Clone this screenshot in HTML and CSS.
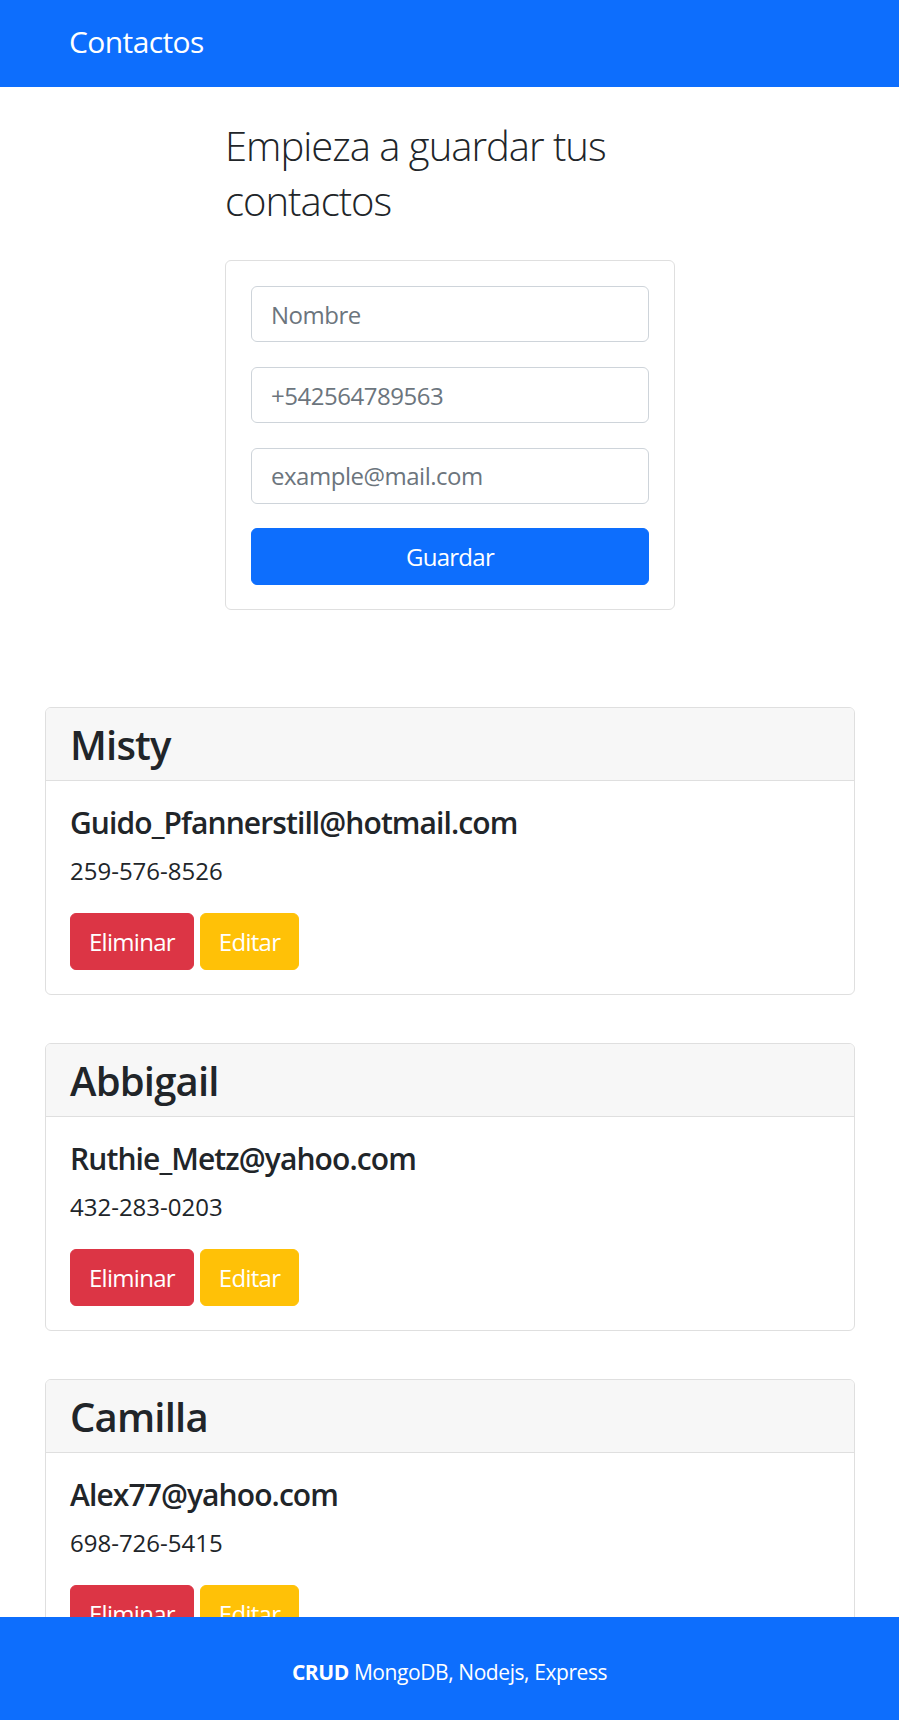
FILE: index.html
```html
<!DOCTYPE html>
<html lang="es">
<head>
<meta charset="utf-8">
<title>Contactos</title>
<link rel="stylesheet" href="styles.css">
</head>
<body>
<nav class="navbar">
  <a class="brand" href="#">Contactos</a>
</nav>
<main class="page">
  <section class="form-col">
    <h1 class="title">Empieza a guardar tus contactos</h1>
    <form class="form-card">
      <input class="field" type="text" placeholder="Nombre">
      <input class="field" type="text" placeholder="+542564789563">
      <input class="field" type="email" placeholder="example@mail.com">
      <button class="btn btn-primary btn-block" type="button">Guardar</button>
    </form>
  </section>
  <section class="contacts">
    <article class="card">
      <header class="card-header"><h2 class="card-name">Misty</h2></header>
      <div class="card-body">
        <h5 class="card-email">Guido_Pfannerstill@hotmail.com</h5>
        <p class="card-phone">259-576-8526</p>
        <div class="actions">
          <button class="btn btn-danger" type="button">Eliminar</button>
          <button class="btn btn-warning" type="button">Editar</button>
        </div>
      </div>
    </article>
    <article class="card">
      <header class="card-header"><h2 class="card-name">Abbigail</h2></header>
      <div class="card-body">
        <h5 class="card-email">Ruthie_Metz@yahoo.com</h5>
        <p class="card-phone">432-283-0203</p>
        <div class="actions">
          <button class="btn btn-danger" type="button">Eliminar</button>
          <button class="btn btn-warning" type="button">Editar</button>
        </div>
      </div>
    </article>
    <article class="card">
      <header class="card-header"><h2 class="card-name">Camilla</h2></header>
      <div class="card-body">
        <h5 class="card-email">Alex77@yahoo.com</h5>
        <p class="card-phone">698-726-5415</p>
        <div class="actions">
          <button class="btn btn-danger" type="button">Eliminar</button>
          <button class="btn btn-warning" type="button">Editar</button>
        </div>
      </div>
    </article>
  </section>
</main>
<footer class="footer"><strong>CRUD</strong> MongoDB, Nodejs, Express</footer>
</body>
</html>
```
FILE: styles.css
```css
* { box-sizing: border-box; }

body {
  margin: 0;
  font-family: "Open Sans", "Noto Sans", "Liberation Sans", sans-serif;
  font-size: 24px;
  line-height: 1.5;
  color: #212529;
  background: #fff;
}

.navbar {
  background: #0d6efd;
  height: 87px;
  padding: 19px 0 0 69px;
}

.brand {
  display: inline-block;
  color: #fff;
  font-size: 30px;
  line-height: 45px;
  text-decoration: none;
  letter-spacing: -0.02em;
}

.form-col {
  margin: 32px 224px 0 225px;
}

.title {
  margin: 0 0 32px;
  font-size: 40px;
  font-weight: 300;
  line-height: 54.7px;
  letter-spacing: -0.025em;
}

.form-card {
  display: flex;
  flex-direction: column;
  gap: 24.6px;
  border: 1px solid #dfdfdf;
  border-radius: 6px;
  padding: 25px 25px 24px;
}

.field {
  height: 56px;
  border: 1px solid #ced4da;
  border-radius: 6px;
  padding: 0 19px;
  font-family: inherit;
  font-size: 24px;
  color: #212529;
  letter-spacing: -0.02em;
  background: #fff;
}

.field::placeholder {
  color: #6c757d;
  opacity: 1;
}

.btn {
  font-family: inherit;
  font-size: 24px;
  line-height: 36px;
  padding: 9.5px 18px;
  border: 1px solid transparent;
  border-radius: 6px;
  color: #fff;
  letter-spacing: -0.03em;
  cursor: pointer;
}

.btn-primary { background: #0d6efd; border-color: #0d6efd; }
.btn-danger { background: #dc3545; border-color: #dc3545; }
.btn-warning { background: #ffc107; border-color: #ffc107; }

.btn-block {
  width: 100%;
  height: 57px;
}

.contacts {
  margin: 97px 44px 0 45px;
  display: flex;
  flex-direction: column;
  gap: 48px;
}

.card {
  border: 1px solid #dfdfdf;
  border-radius: 6px;
  overflow: hidden;
}

.card-header {
  background: #f7f7f7;
  border-bottom: 1px solid #dfdfdf;
  padding: 13px 24px 11px;
}

.card-name {
  margin: 0;
  font-size: 40px;
  line-height: 48px;
  font-weight: 600;
  letter-spacing: -0.02em;
}

.card-body {
  padding: 24px;
}

.card-email {
  margin: 0 0 12px;
  font-size: 30px;
  line-height: 36px;
  font-weight: 600;
  letter-spacing: -0.03em;
}

.card-phone {
  margin: 0 0 24px;
  line-height: 36px;
}

.actions {
  display: flex;
  gap: 6px;
}

.footer {
  position: fixed;
  left: 0;
  right: 0;
  bottom: 0;
  height: 103px;
  padding-top: 40px;
  background: #0d6efd;
  color: #fff;
  text-align: center;
  font-size: 21px;
  line-height: 31.5px;
  letter-spacing: -0.02em;
}
```
